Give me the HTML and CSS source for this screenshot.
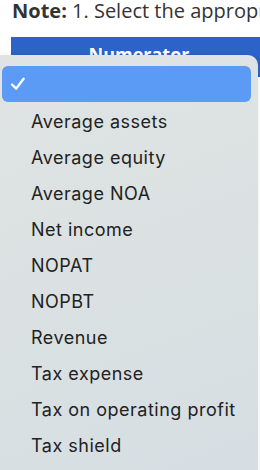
FILE: index.html
```html
<!DOCTYPE html>
<html>
<head>
<meta charset="utf-8">
<link rel="stylesheet" href="styles.css">
</head>
<body>
<div class="page">
  <p class="note"><b>Note:</b> 1. Select the appropriate items from the drop-down lists.</p>
  <div class="table-head">Numerator</div>
</div>
<div class="menu">
  <div class="item selected"><svg class="check" width="16" height="16" viewBox="0 0 16 16"><path d="M2 8.5 L6.2 12.6 L13.6 2.8" fill="none" stroke="#fff" stroke-width="2.4" stroke-linecap="round" stroke-linejoin="round"/></svg></div>
  <div class="item">Average assets</div>
  <div class="item">Average equity</div>
  <div class="item">Average NOA</div>
  <div class="item">Net income</div>
  <div class="item">NOPAT</div>
  <div class="item">NOPBT</div>
  <div class="item">Revenue</div>
  <div class="item">Tax expense</div>
  <div class="item">Tax on operating profit</div>
  <div class="item">Tax shield</div>
</div>
</body>
</html>
```
FILE: styles.css
```css
html, body {
  margin: 0;
  padding: 0;
  background: #fff;
  overflow: hidden;
  width: 260px;
  height: 470px;
}
.page {
  padding-left: 11px;
  width: 249px;
  overflow: hidden;
}
.note {
  margin: 0;
  padding: 0 0 0 1px;
  font-family: "Open Sans", sans-serif;
  font-size: 20px;
  line-height: 22px;
  color: #333;
  white-space: nowrap;
  overflow: hidden;
}
.note b {
  font-weight: 700;
}
.table-head {
  margin-top: 15px;
  width: 256px;
  height: 40px;
  background: #2b63c8;
  color: #fff;
  font-family: "Open Sans", sans-serif;
  font-weight: 700;
  font-size: 18px;
  line-height: 24px;
  padding-top: 5px;
  box-sizing: border-box;
  text-align: center;
}
.menu {
  position: absolute;
  left: 0;
  top: 55px;
  width: 258px;
  height: 430px;
  box-sizing: border-box;
  padding: 11px 7px 0 2px;
  background: linear-gradient(160deg, #dfe3e3 0%, #dbe1e2 50%, #d5dee3 100%);
  border-radius: 0 10px 0 0;
  box-shadow: 0 0 6px rgba(0,0,0,0.08);
}
.item {
  height: 36px;
  display: flex;
  align-items: center;
  padding-left: 29px;
  font-family: Inter, "Noto Sans", sans-serif;
  font-size: 18px;
  letter-spacing: 0.5px;
  color: #222;
}
.item.selected {
  height: 36px;
  margin-bottom: 1px;
  background: #5b9af5;
  border-radius: 6px;
  padding-left: 8px;
}
.check {
  display: block;
}
```
